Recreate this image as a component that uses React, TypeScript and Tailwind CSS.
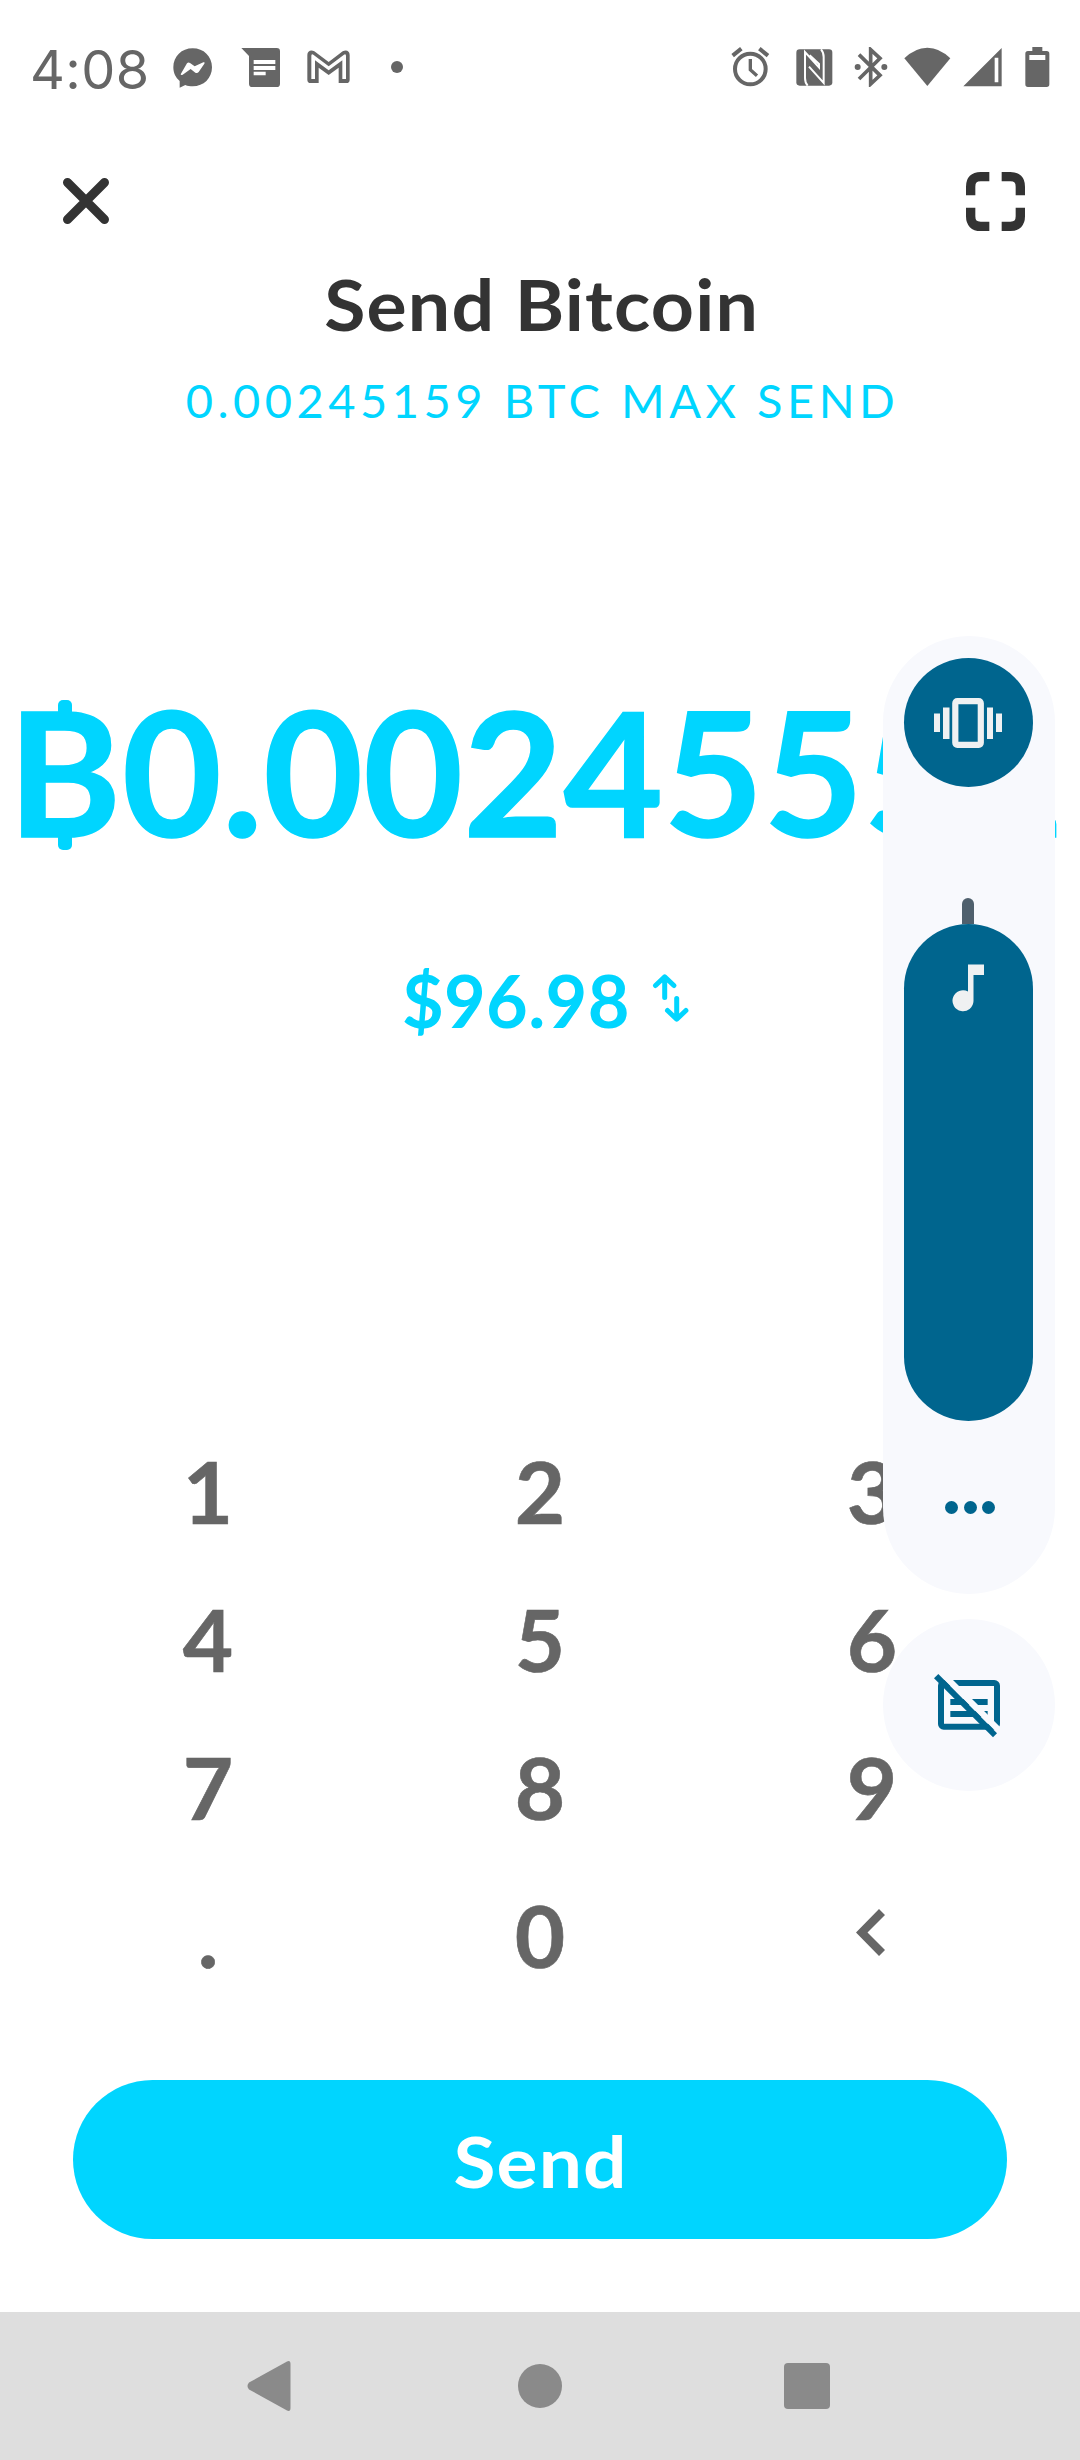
import type { ReactNode } from 'react'

const keys = ['1', '2', '3', '4', '5', '6', '7', '8', '9', '.', '0']

type glyphProps = {
  box: string,
  className: string,
  children: ReactNode,
}

function Glyph({ box, className, children }: glyphProps) {
  return (
    <svg viewBox={box} className={`shrink-0 ${className}`} fill="currentColor">
      {children}
    </svg>
  )
}

function StatusBar() {
  return (
    <div className="flex h-[135px] items-start justify-between pl-[30px] pr-[30px] pt-[47px] text-[#666666]">
      <div className="flex items-start">
        <span className="-mt-[1px] h-[48px] w-[143px] whitespace-nowrap font-['Inter',sans-serif] text-[54px] leading-[48px] tracking-[0.4px]">
          4:08
        </span>
        {/* messenger */}
        <Glyph box="520 81 120 123" className="mr-[28px] h-[41px] w-[40px]">
          <path d="M579 85C546 85 521 109 521 142C521 159 528 173 540 183V203L557 195C564 198 571 199 579 199C612 199 637 175 637 142C637 109 612 85 579 85Z" />
          <path d="M543 163L562 130Q566 126 571 129L585 139L611 127Q617 125 614 131L597 156Q593 161 587 158L573 147L549 164Q544 167 543 163Z" fill="white" />
        </Glyph>
        {/* messages */}
        <Glyph box="724 81 120 123" className="mr-[26px] h-[41px] w-[40px]">
          <path d="M725 84H831Q841 84 841 94V191Q841 201 831 201H758Q748 201 748 191V108Z" />
          <path d="M762 120H827V132H762ZM762 138H827V150H762ZM762 155H798V166H762Z" fill="white" />
        </Glyph>
        {/* gmail */}
        <Glyph box="922 81 132 123" className="mr-[40px] h-[41px] w-[44px]">
          <path
            fillRule="evenodd"
            d="M923 105C923 93 934 88 944 94L987 126L1029 94C1040 88 1050 93 1050 105V179Q1050 189 1040 189H1017V143L987 165L957 143V189H933Q923 189 923 179ZM935 107V177H946V121L987 151L1028 121V177H1039V107Q1038 101 1033 104L987 139L941 104Q936 101 935 107Z"
          />
        </Glyph>
        <span className="mt-[14px] h-[12px] w-[12px] rounded-full bg-[#666666]" />
      </div>

      <div className="flex items-start">
        {/* alarm */}
        <Glyph box="92 81 117 120" className="mr-[26px] h-[40px] w-[39px]">
          <circle cx="150" cy="147" r="46" fill="none" stroke="currentColor" strokeWidth="12" />
          <path d="M97 107L123 86M203 107L177 86" stroke="currentColor" strokeWidth="12" />
          <path d="M150 117V149L170 167" fill="none" stroke="currentColor" strokeWidth="10" />
        </Glyph>
        {/* nfc */}
        <Glyph box="287 81 111 120" className="mr-[21px] h-[40px] w-[37px]">
          <rect x="288" y="88" width="108" height="109" rx="10" />
          <path d="M322 197Q314 188 314 174V96L356 142V132L328 106" fill="none" stroke="white" strokeWidth="6" />
          <path d="M362 88Q370 97 370 111V189L326 140" fill="none" stroke="white" strokeWidth="6" />
        </Glyph>
        {/* bluetooth */}
        <Glyph box="462 81 102 120" className="mr-[16px] h-[40px] w-[34px]">
          <path d="M477 104L540 166L512 192V89L540 115L477 177" fill="none" stroke="currentColor" strokeWidth="11" />
          <circle cx="473" cy="141" r="9" />
          <circle cx="553" cy="141" r="9" />
        </Glyph>
        {/* wifi */}
        <Glyph box="614 81 141 120" className="mr-[12px] h-[40px] w-[47px]">
          <path d="M684 198L615 115Q647 83 684 83Q721 83 753 115Z" />
        </Glyph>
        {/* cell signal */}
        <Glyph box="791 81 117 120" className="mr-[23px] h-[40px] w-[39px]">
          <path fillRule="evenodd" d="M792 199L907 84V199ZM886 113V187H897V113Z" />
        </Glyph>
        {/* battery */}
        <Glyph box="977 81 75 120" className="h-[40px] w-[25px]">
          <path fillRule="evenodd" d="M999 81H1029V93H1042Q1050 93 1050 101V193Q1050 201 1042 201H986Q978 201 978 193V101Q978 93 986 93H999ZM990 105V120H1038V105Z" />
        </Glyph>
      </div>
    </div>
  )
}

function VolumePanel() {
  return (
    <div className="absolute left-[883px] top-[636px] flex flex-col items-center gap-[25px] text-[#00658e]">
      <div className="flex h-[958px] w-[172px] flex-col items-center rounded-full bg-[#f8f9fd] pr-[1px] pt-[22px]">
        <div className="flex h-[129px] w-[129px] items-center justify-center rounded-full bg-[#00658e] pr-[1px] text-[#eff1f2]">
          <Glyph box="934 697 68 50" className="h-[50px] w-[68px]">
            <path d="M934 712.5h6v18.5h-6zM943 706.5h6.5v31.5h-6.5zM987 706.5h6v31.5h-6zM996 712.5h6v18.5h-6z" />
            <rect x="955.3" y="700.2" width="25.5" height="43.6" rx="2" fill="none" stroke="currentColor" strokeWidth="6.2" />
          </Glyph>
        </div>
        <div className="-ml-[1px] mt-[111px] h-[26px] w-[12px] rounded-t-full bg-[#4f606d]" />
        <div className="flex h-[497px] w-[129px] justify-center rounded-full bg-[#00658e] pr-[1px] pt-[40px] text-[#eff1f2]">
          <Glyph box="952 964 32 48" className="h-[48px] w-[32px]">
            <path d="M968 964.5H984V975H973.5V1001A10.5 10.5 0 1 1 968 991.5Z" />
          </Glyph>
        </div>
        <div className="mt-[80px] flex gap-[5.5px] pl-[3px]">
          <span className="h-[13px] w-[13px] rounded-full bg-[#00658e]" />
          <span className="h-[13px] w-[13px] rounded-full bg-[#00658e]" />
          <span className="h-[13px] w-[13px] rounded-full bg-[#00658e]" />
        </div>
      </div>

      <div className="flex h-[172px] w-[172px] items-center justify-center rounded-full bg-[#f8f9fd]">
        {/* captions off */}
        <Glyph box="222 876 210 198" className="h-[66px] w-[70px]">
          <rect x="243" y="909" width="168" height="131" rx="8" fill="none" stroke="currentColor" strokeWidth="18" />
          <path d="M271 957H383V975H271ZM271 993H383V1011H271Z" />
          <path d="M253 900L279 900L430 1051L404 1051Z" fill="#f8f9fd" />
          <path d="M222 895L235 882L411 1060L399 1072Z" />
        </Glyph>
      </div>
    </div>
  )
}

export default function App() {
  return (
    <div className="relative flex h-[2460px] w-[1080px] flex-col overflow-hidden bg-white font-['Lato',sans-serif]">
      <StatusBar />

      <div className="flex h-[132px] items-center justify-between pl-[62px] pr-[55px] text-[#333333]">
        <Glyph box="0 0 48 48" className="h-[48px] w-[48px]">
          <path d="M5.5 5.5L42.5 42.5M42.5 5.5L5.5 42.5" stroke="currentColor" strokeWidth="9" strokeLinecap="round" />
        </Glyph>
        <Glyph box="77 64 177 177" className="h-[59px] w-[59px]">
          <path
            d="M91 134V108Q91 78 121 78H147M184 78H210Q240 78 240 108V134M240 171V197Q240 227 210 227H184M147 227H121Q91 227 91 197V171"
            fill="none"
            stroke="currentColor"
            strokeWidth="28"
          />
        </Glyph>
      </div>

      <h1 className="h-[73px] scale-x-[1.06] pl-[3px] text-center text-[71px] font-bold leading-[74px] tracking-[1.1px] text-[#333333]">
        Send Bitcoin
      </h1>
      <p className="mt-[30px] h-[60px] whitespace-nowrap pl-[5px] text-center text-[47px] leading-[60px] tracking-[4.5px] text-[#00d5ff]">
        0.00245159 BTC MAX SEND
      </p>

      <div className="mt-[250px] flex h-[180px] whitespace-nowrap pl-[8px] text-[172px] font-bold leading-[181px] text-[#00d5ff] [-webkit-text-stroke:1.5px_#00d5ff]">
        <span className="relative w-[114px]">
          B
          <span className="absolute left-[50px] top-[20px] h-[20px] w-[14px] rounded-t-[5px] bg-[#00d5ff]" />
          <span className="absolute left-[50px] top-[150px] h-[20px] w-[14px] rounded-b-[5px] bg-[#00d5ff]" />
        </span>
        <span className="tracking-[0.3px]">0.00245552</span>
      </div>

      <div className="mt-[100px] flex h-[80px] items-center pl-[402px] text-[#00d5ff]">
        <span className="w-[250px] text-[72px] font-bold leading-[80px] tracking-[0.3px]">$96.98</span>
        <Glyph box="652 974 37 48" className="-mt-[4px] h-[48px] w-[37px]">
          <path
            d="M664.7 997.5V977.5M655.5 985.5L664.7 976.8L673.9 985.5M676.7 998.5V1019M667.5 1010.5L676.7 1019.2L685.9 1010.5"
            fill="none"
            stroke="currentColor"
            strokeWidth="5"
            strokeLinecap="round"
            strokeLinejoin="round"
          />
        </Glyph>
      </div>

      <div className="mt-[377px] grid grid-cols-3 px-[42px] text-center text-[87px] font-bold leading-[148px] text-[#666666] [-webkit-text-stroke:0.6px_#666666]">
        {keys.map((key) => (
          <button key={key} className="h-[148px]">
            {key}
          </button>
        ))}
        <button className="flex h-[148px] items-center justify-center pb-[5px] pr-[4px]">
          <Glyph box="856 1909 29 47" className="h-[47px] w-[29px]">
            <path d="M856 1932.5L879 1909L885 1915L867.5 1932.5L885 1950L879 1956Z" />
          </Glyph>
        </button>
      </div>

      <button className="mx-[73px] mt-[71px] h-[159px] rounded-full bg-[#00d5ff] text-[71px] font-bold leading-[162px] text-white">
        <span className="inline-block scale-x-[1.08] pl-[1px] tracking-[1px]">Send</span>
      </button>

      <div className="mt-[73px] flex h-[148px] items-center bg-[#dedede] text-[#8a8a8a]">
        <Glyph box="0 0 44 52" className="ml-[247px] h-[52px] w-[44px]">
          <path d="M2 22.5L40 1.5Q43.5 0 43.5 4V48Q43.5 52 40 50.5L2 29.5Q-1 26 2 22.5Z" />
        </Glyph>
        <span className="ml-[227px] h-[44px] w-[44px] rounded-full bg-[#8a8a8a]" />
        <span className="ml-[222px] h-[46px] w-[46px] rounded-[4px] bg-[#8a8a8a]" />
      </div>

      <VolumePanel />
    </div>
  )
}
